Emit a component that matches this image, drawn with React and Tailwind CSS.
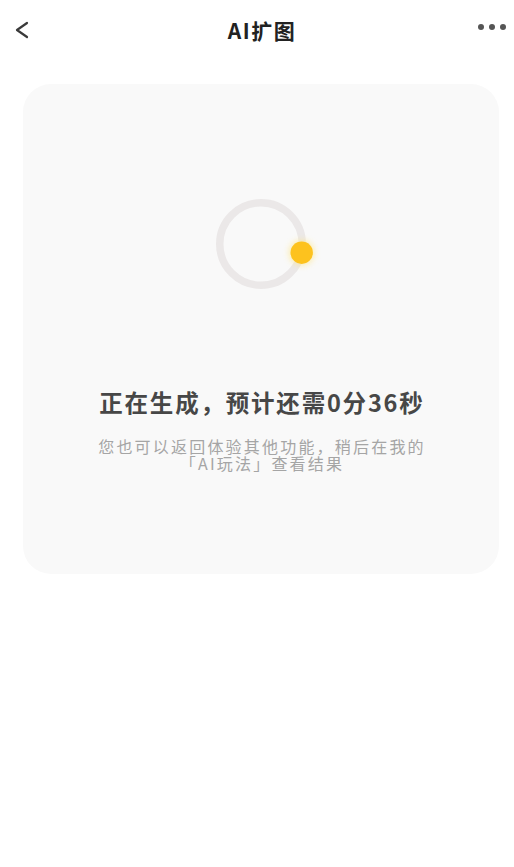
export default function App() {
  return (
    <div className="w-[514px] h-[867px] bg-white overflow-hidden" style={{ fontFamily: '"Noto Sans CJK SC", "Noto Sans", sans-serif' }}>
      <div className="relative h-[60px] flex items-center justify-between pl-[14px] pr-[8px]">
        <svg width="16" height="18" viewBox="0 0 16 18">
          <polyline points="13,2 3,9 13,16" fill="none" stroke="#3a3a3a" strokeWidth="2.2" strokeLinecap="round" strokeLinejoin="round" />
        </svg>
        <div className="absolute left-0 right-0 top-0 h-[60px] flex items-center justify-center pl-[10px] pointer-events-none">
          <span className="text-[21px] font-bold text-[#222] tracking-[1.5px] leading-none">AI扩图</span>
        </div>
        <div className="flex items-center gap-[5px] mb-[6px]">
          <span className="w-[6px] h-[6px] rounded-full bg-[#555]"></span>
          <span className="w-[6px] h-[6px] rounded-full bg-[#555]"></span>
          <span className="w-[6px] h-[6px] rounded-full bg-[#555]"></span>
        </div>
      </div>
      <div className="ml-[23px] mt-[24px] w-[476px] h-[490px] rounded-[28px] bg-[#f9f9f9] flex flex-col items-center pt-[115px]">
        <svg width="90" height="90" viewBox="0 0 90 90" className="overflow-visible">
          <defs>
            <filter id="glow" x="-100%" y="-100%" width="300%" height="300%">
              <feGaussianBlur stdDeviation="3" />
            </filter>
          </defs>
          <circle cx="45" cy="45" r="41.25" fill="none" stroke="#ebe8e8" strokeWidth="7.5" />
          <circle cx="85.7" cy="53.7" r="12.5" fill="#fde68a" opacity="0.7" filter="url(#glow)" />
          <circle cx="85.7" cy="53.7" r="11.2" fill="#fdc21e" />
        </svg>
        <div className="mt-[97px] pl-[1.8px] text-[23.5px] leading-[32px] font-bold text-[#474747] tracking-[1.8px]">
          正在生成，预计还需0分36秒
        </div>
        <div className="mt-[20px] pl-[2px] text-[16px] leading-[17px] text-[#a5a5a5] tracking-[2.2px] text-center">
          <div>您也可以返回体验其他功能，稍后在我的</div>
          <div>「AI玩法」查看结果</div>
        </div>
      </div>
    </div>
  );
}
